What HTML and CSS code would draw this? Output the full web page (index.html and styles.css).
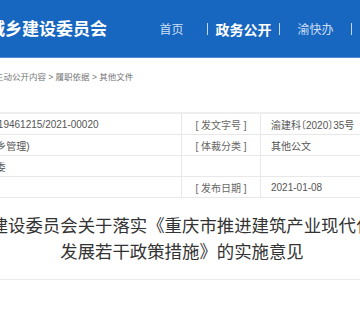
FILE: index.html
```html
<!DOCTYPE html>
<html lang="zh-CN">
<head>
    <meta charset="UTF-8">
    <meta name="viewport" content="width=device-width, initial-scale=1.0">
    <title>其他文件</title>
    <link rel="stylesheet" href="styles.css">
</head>
<body>
    <div class="header">
        <div class="header-inner">
            <div class="site-name">重庆市住房和城乡建设委员会</div>
            <ul class="nav">
                <li>首页</li>
                <li class="active">政务公开</li>
                <li>渝快办</li>
                <li>互动交流</li>
            </ul>
        </div>
    </div>

    <div class="main">
        <div class="page">
            <div class="crumb">当前位置：首页 &gt; 政务公开 &gt; 主动公开内容 &gt; 履职依据 &gt; 其他文件</div>

            <table class="info">
                <tr>
                    <td class="label">[ 索引号 ]</td>
                    <td class="value">115000000019461215/2021-00020</td>
                    <td class="label">[ 发文字号 ]</td>
                    <td class="value">渝建科〔2020〕35号</td>
                </tr>
                <tr>
                    <td class="label">[ 主题分类 ]</td>
                    <td class="value">城乡建设(城乡管理)</td>
                    <td class="label">[ 体裁分类 ]</td>
                    <td class="value">其他公文</td>
                </tr>
                <tr>
                    <td class="label">[ 发布机构 ]</td>
                    <td class="value">重庆市 住建委</td>
                    <td class="label"></td>
                    <td class="value"></td>
                </tr>
                <tr>
                    <td class="label">[ 成文日期 ]</td>
                    <td class="value">2021-01-04</td>
                    <td class="label">[ 发布日期 ]</td>
                    <td class="value">2021-01-08</td>
                </tr>
            </table>

            <h1 class="doc-title">建设委员会关于落实《重庆市推进建筑产业现代化<br>发展若干政策措施》的实施意见</h1>
        </div>
    </div>
</body>
</html>
```

FILE: styles.css
```css
html, body {
    overflow-x: hidden;
}
body {
    margin: 0;
    font-family: "Liberation Sans", "Noto Sans CJK SC", sans-serif;
    color: #555;
    background-color: #fff;
}
/* page is wider than the window, keep it centred */
.header, .main {
    display: flex;
    justify-content: center;
    padding-left: 4px;
}
.header {
    background-color: #1766bf;
    border-bottom: 1px solid #4f8bd2;
}
.header-inner, .page {
    flex: none;
    width: 652px;
}
.header-inner {
    height: 57px;
    display: flex;
    align-items: center;
    padding-left: 30px;
    box-sizing: border-box;
}
.site-name {
    font-family: "Noto Sans CJK SC", sans-serif;
    font-size: 17px;
    font-weight: bold;
    color: #fff;
    margin-top: -3px;
}
.nav {
    list-style: none;
    margin: 0 0 0 29px;
    padding: 0;
    display: flex;
}
.nav li {
    width: 71px;
    height: 12px;
    line-height: 12px;
    text-align: center;
    border-right: 1px solid rgba(255, 255, 255, 0.75);
    font-family: "Noto Sans CJK SC", sans-serif;
    font-size: 12px;
    color: #cddff4;
}
.nav li.active {
    font-size: 14px;
    font-weight: bold;
    color: #fff;
}
.crumb {
    padding: 12px 0 0 26px;
    line-height: 14px;
    font-size: 8.5px;
    color: #777;
}
.info {
    width: 100%;
    margin-top: 28px;
    border-collapse: collapse;
    table-layout: fixed;
    font-size: 10px;
}
.info td {
    height: 20px;
    padding: 0 10px;
    border: 1px solid #e8e8e8;
    white-space: nowrap;
    overflow: hidden;
}
.info tr:first-child td {
    border-top: 2px solid #eee;
}
.info td.label {
    width: 58px;
    text-align: center;
    color: #666;
}
.info td.value {
    width: 228px;
    font-feature-settings: "halt";
}
.info tr td:nth-child(2) {
    padding-left: 7px;
}
.doc-title {
    margin: 14px 0 0;
    padding-bottom: 15px;
    border-bottom: 1px solid #eaeaea;
    text-align: center;
    font-family: "Noto Sans CJK SC", sans-serif;
    font-size: 17.4px;
    line-height: 26px;
    font-weight: normal;
    color: #333;
}
```
